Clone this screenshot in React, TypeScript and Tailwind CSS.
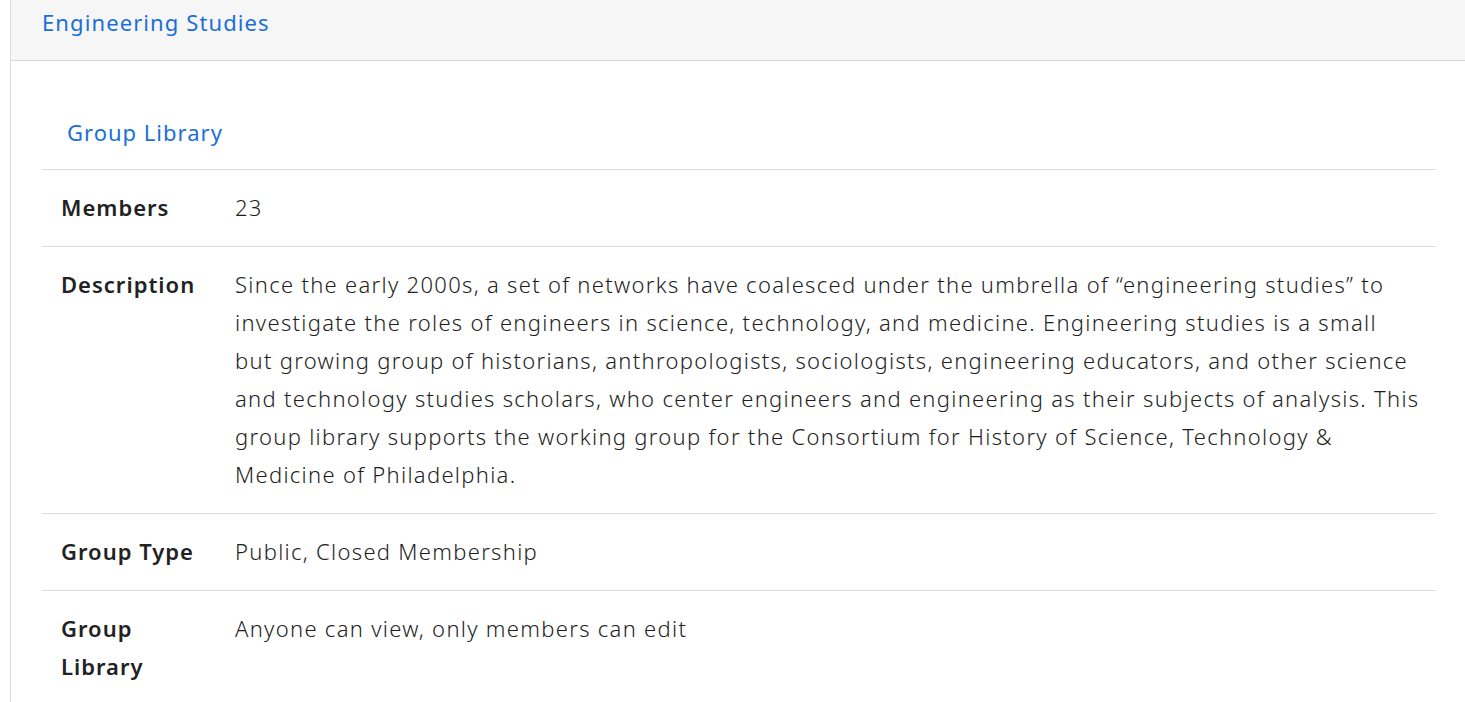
import React from 'react';

const description = [
  'Since the early 2000s, a set of networks have coalesced under the umbrella of \u201cengineering studies\u201d to',
  'investigate the roles of engineers in science, technology, and medicine. Engineering studies is a small',
  'but growing group of historians, anthropologists, sociologists, engineering educators, and other science',
  'and technology studies scholars, who center engineers and engineering as their subjects of analysis. This',
  'group library supports the working group for the Consortium for History of Science, Technology &',
  'Medicine of Philadelphia.',
];

const rows: { label: string; value: React.ReactNode }[] = [
  { label: 'Members', value: '23' },
  {
    label: 'Description',
    value: description.map((line, i) => (
      <React.Fragment key={i}>
        {line}
        {i < description.length - 1 && <br />}
      </React.Fragment>
    )),
  },
  { label: 'Group Type', value: 'Public, Closed Membership' },
  { label: 'Group Library', value: 'Anyone can view, only members can edit' },
];

export default function App() {
  return (
    <div
      className="min-h-[702px] bg-white text-[#222]"
      style={{ fontFamily: '"Noto Sans", "Open Sans", sans-serif' }}
    >
      <div className="ml-[10px] min-h-[702px] border-l border-[#dcdcdc]">
        <header className="h-[61px] border-b border-[#d9d9d9] bg-[#f6f6f6] pl-[31px] pt-[6px]">
          <a className="text-[22px] leading-[32px] tracking-[1.1px] text-[#1a6fd8]">
            Engineering Studies
          </a>
        </header>

        <section className="pl-[31px] pr-[29px]">
          <div className="pl-[25px] pt-[55px] pb-[21px]">
            <a className="text-[22px] leading-[32px] tracking-[1px] text-[#1a6fd8]">Group Library</a>
          </div>
          <table className="w-full border-collapse text-[22px] leading-[38px]">
            <tbody>
              {rows.map((r) => (
                <tr key={r.label} className="border-t border-[#dcdcdc] align-top">
                  <th className="w-[193px] pt-[18px] pb-[20px] pl-[19px] pr-[20px] text-left font-semibold tracking-[1px]">
                    {r.label}
                  </th>
                  <td className="pt-[18px] pb-[20px] pr-[14px] font-light tracking-[1.3px] text-[#1e1e1e]">
                    {r.value}
                  </td>
                </tr>
              ))}
            </tbody>
          </table>
        </section>
      </div>
    </div>
  );
}
